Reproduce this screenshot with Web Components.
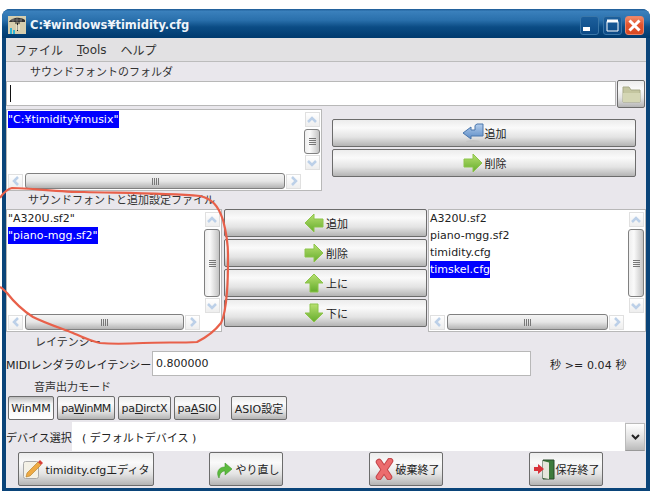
<!DOCTYPE html>
<html>
<head>
<meta charset="utf-8">
<title>timidity.cfg</title>
<style>
html, body { margin: 0; background: #fff; }
body { padding: 9px 8px 0 2px; font: 11px "DejaVu Sans", "Noto Sans CJK JP", sans-serif; color: #222; position: relative; height: 495px; box-sizing: border-box; overflow: hidden; }
.mark { position: absolute; left: 0; top: 0; width: 658px; height: 504px; pointer-events: none; }
.row { display: flex; }
.row > * { flex: none; }
.folder { height: 28px; gap: 1px; align-items: flex-start; }
.top { height: 82px; }
.top .side { flex: 1; display: flex; flex-direction: column; gap: 2px; padding: 10px 10px 0; }
.mid { height: 123px; --pad: 0px; }
.mid .side { display: flex; flex-direction: column; gap: 2px; width: 203px; padding: 0 1px 0 2px; }
.latency { height: 25px; align-items: center; }
.latency .hint { margin-left: 19px; white-space: nowrap; letter-spacing: .1px; }
.modes { height: 24px; padding-left: 2px; gap: 3px; }
.modes .gap { width: 5px; }
.device { height: 29px; margin-top: 2px; align-items: center; }
.device .val { width: 553px; height: 29px; background: #fff; display: flex; align-items: center; padding-left: 10px; box-sizing: border-box; }
.device .arrow { width: 18px; height: 26px; border: 1px solid #bbb; border-bottom-color: #999; background: linear-gradient(#fff, #ddd 60%, #bbb); display: flex; align-items: center; justify-content: center; }
.actions { height: 34px; margin-top: 1px; padding-left: 12px; }
</style>
</head>
<body>
<x-window title-text="C:¥windows¥timidity.cfg">
  <x-menubar><span>ファイル</span><span><u>T</u>ools</span><span>ヘルプ</span></x-menubar>
  <x-caption indent="24" height="19" lift="2">サウンドフォントのフォルダ</x-caption>
  <div class="row folder">
    <x-field width="610" caret></x-field>
    <x-button icon="folder" style="width:28px;height:28px;margin-top:-1px"></x-button>
  </div>
  <div class="row top">
    <x-listbox width="316" height="82" thumb="25" hthumb="260">
      <x-item selected>"C:¥timidity¥musix"</x-item>
    </x-listbox>
    <div class="side">
      <x-button icon="back" style="height:28px">追加</x-button>
      <x-button icon="right" style="height:28px">削除</x-button>
    </div>
  </div>
  <x-caption indent="22" height="18" lift="2">サウンドフォントと追加設定ファイル</x-caption>
  <div class="row mid">
    <x-listbox width="216" height="123" thumb="68" hthumb="159">
      <x-item>"A320U.sf2"</x-item>
      <x-item selected>"piano-mgg.sf2"</x-item>
    </x-listbox>
    <div class="side">
      <x-button icon="left" style="height:28px">追加</x-button>
      <x-button icon="right" style="height:28px">削除</x-button>
      <x-button icon="up" style="height:28px">上に</x-button>
      <x-button icon="down" style="height:28px">下に</x-button>
    </div>
    <x-listbox width="218" height="123" thumb="68" hthumb="161">
      <x-item>A320U.sf2</x-item>
      <x-item>piano-mgg.sf2</x-item>
      <x-item>timidity.cfg</x-item>
      <x-item selected>timskel.cfg</x-item>
    </x-listbox>
  </div>
  <x-caption indent="29" height="19" lift="2">レイテンシー</x-caption>
  <div class="row latency">
    <span style="white-space:nowrap;width:146px">MIDIレンダラのレイテンシー</span>
    <x-field width="379" text="0.800000"></x-field>
    <span class="hint">秒 &gt;= 0.04 秒</span>
  </div>
  <x-caption indent="28" height="20">音声出力モード</x-caption>
  <div class="row modes">
    <x-button pressed style="width:46px">WinMM</x-button>
    <x-button style="width:58px;letter-spacing:-.6px">pa<u>W</u>inMM</x-button>
    <x-button style="width:53px;letter-spacing:-.2px">pa<u>D</u>irctX</x-button>
    <x-button style="width:46px;letter-spacing:-.2px">pa<u>A</u>SIO</x-button>
    <span class="gap"></span>
    <x-button style="width:56px">ASIO設定</x-button>
  </div>
  <div class="row device">
    <span style="white-space:nowrap;width:66px">デバイス選択</span>
    <div class="val">( デフォルトデバイス )</div>
    <div class="arrow"><svg width="9" height="6" viewBox="0 0 9 6"><path d="M1 1l3.5 3.5L8 1" fill="none" stroke="#222" stroke-width="2"/></svg></div>
  </div>
  <div class="row actions">
    <x-button icon="note" style="width:136px;margin-right:55px">timidity.cfgエディタ</x-button>
    <x-button icon="redo" style="width:74px;margin-right:86px">やり直し</x-button>
    <x-button icon="cross" style="width:74px;margin-right:86px">破棄終了</x-button>
    <x-button icon="door" style="width:74px">保存終了</x-button>
  </div>
</x-window>
<svg class="mark" viewBox="0 0 658 504">
  <path d="M0 198C4 192 7 189 12 188C30 188 60 192 84 192C120 193 165 193 200 196C212 199 218 205 223 220C227 235 228 245 228 255C228 270 228 280 227 292C226 305 225 315 221 323C214 332 205 338 197 342C180 343 160 342 143 343C125 344 110 344 100 343C90 341 82 337 73 333C60 328 45 323 33 317C22 310 14 302 7 293C4 290 2 288 0 287" fill="none" stroke="#e8604a" stroke-width="2.2"/>
</svg>
<script>
const GREEN = '<defs><linearGradient id="g" x1="0" y1="0" x2="0" y2="1"><stop offset="0" stop-color="#b8e070"/><stop offset="1" stop-color="#64ac2c"/></linearGradient></defs>';
const ARROW = 'fill="url(#g)" stroke="#8cc44a" stroke-linejoin="round"';
const ICONS = {
  folder: '<path d="M3 4h6l2 3h9v12H3z" fill="#c4c6a0" stroke="#a8aa88"/><path d="M3 10h17v9H3z" fill="#d4d6b4"/>',
  back: '<defs><linearGradient id="g" x1="0" y1="0" x2="0" y2="1"><stop offset="0" stop-color="#b4cdec"/><stop offset="1" stop-color="#5c8cc6"/></linearGradient></defs><ellipse cx="11" cy="19.5" rx="7" ry="1.5" fill="#c4c4c4"/><path d="M1 11L9 5v3h4V3.500L15 2h6v12H9v3z" fill="url(#g)" stroke="#4a76ac" stroke-linejoin="round"/>',
  right: GREEN + '<path d="M2 7h9V2l9 9-9 9v-5H2z" ' + ARROW + '/>',
  left: GREEN + '<path d="M20 7h-9V2l-9 9 9 9v-5h9z" ' + ARROW + '/>',
  up: GREEN + '<path d="M7 20v-9H2l9-9 9 9h-5v9z" ' + ARROW + '/>',
  down: GREEN + '<path d="M7 2v9H2l9 9 9-9h-5V2z" ' + ARROW + '/>',
  note: '<rect x="1.500" y="3.500" width="15" height="17" rx="2" fill="#f4f1e6" stroke="#aaa"/><path d="M4 19l1-4L16 4l3 3L8 18z" fill="#eeaa44" stroke="#b07a24" stroke-width=".6"/><path d="M16 4l2-2 3 3-2 2z" fill="#d8403a"/>',
  redo: '<path d="M6 20C3 15 5 9 12 9V5l7 6-7 6v-4C9 13 7 15 6 20z" fill="#5cba3e" stroke="#3f9a2a" stroke-width=".6"/>',
  cross: '<path d="M6 4l10 15M17 3L6 19" fill="none" stroke="#c2464a" stroke-width="6.500" stroke-linecap="round"/><path d="M6 4l10 15M17 3L6 19" fill="none" stroke="#ec6c6e" stroke-width="4.500" stroke-linecap="round"/>',
  door: '<path d="M10 2h11v19H10z" fill="#3d7a3c" stroke="#2a4a2a"/><path d="M10 3l6 1.500V21l-6-1z" fill="#e6e6dc"/><path d="M1 9h4V6l6 5-6 5v-3H1z" fill="#d8323a"/>'
};

class XWindow extends HTMLElement {
  constructor() {
    super();
    this.attachShadow({ mode: "open" }).innerHTML = `<style>
      :host { display: block; width: 648px; height: 482px; box-sizing: border-box; background: #0a4479; border-radius: 8px 8px 0 0; padding: 0 4px 3px; }
      .bar { box-sizing: border-box; height: 29px; display: flex; align-items: center; margin: 0 -4px; padding: 3px 6px 0; border-radius: 8px 8px 0 0; background: linear-gradient(#1d5a94, #3a80bc 8%, #2a70ac 38%, #0b4c85 62%, #003a6e); color: #eef4fa; font: bold 11.5px "DejaVu Sans", sans-serif; }
      .logo { width: 18px; height: 18px; margin-right: 4px; flex: none; }
      .title { flex: 1; }
      .ctl { box-sizing: border-box; width: 19px; height: 19px; margin-left: 3.5px; border: 1px solid #3a76a8; border-radius: 3px; background: linear-gradient(#1c5f9c, #0c4a86); display: block; }
      .ctl.close { background: linear-gradient(#f08a68, #e2542e 45%, #d84a24); border-color: #e8846a; }
      .ctl svg { display: block; }
      .body { height: 450px; background: #e9e7ec; }
    </style>
    <div class="bar">
      <svg class="logo" viewBox="0 0 18 18"><rect width="18" height="18" fill="#d6ceae"/><path d="M1 6C3 2 12 0 17 4v2H1z" fill="#333"/><path d="M3 4h11M5 2v4M9 1v5M13 2v4" stroke="#999" stroke-width=".5"/><path d="M7 7h5M9.500 7v8" stroke="#222"/><path d="M8 9h4v5H8z" fill="#f2eeda" opacity=".6"/><path d="M2 12h2v6H2zM5 14h2v4H5z" fill="#2fb4d4"/></svg>
      <span class="title"></span>
      <span class="ctl"><svg width="17" height="17"><rect x="2" y="10" width="7" height="4" fill="#fff"/></svg></span>
      <span class="ctl"><svg width="17" height="17"><path d="M3 4.500h11V14H3z" fill="none" stroke="#fff"/><path d="M3 4h11" stroke="#fff" stroke-width="3"/></svg></span>
      <span class="ctl close"><svg width="17" height="17"><path d="M3.500 3.500l10 10M13.500 3.500l-10 10" stroke="#fff" stroke-width="3"/></svg></span>
    </div>
    <div class="body"><slot></slot></div>`;
    this.shadowRoot.querySelector(".title").textContent = this.getAttribute("title-text");
  }
}

class XMenubar extends HTMLElement {
  constructor() {
    super();
    this.attachShadow({ mode: "open" }).innerHTML = `<style>
      :host { display: flex; gap: 14px; height: 23px; padding-left: 9px; align-items: center; background: #e2e1e3; border-bottom: 1px solid #bcbcbc; font-size: 12px; color: #333; }
    </style><slot></slot>`;
  }
}

class XCaption extends HTMLElement {
  constructor() {
    super();
    this.attachShadow({ mode: "open" }).innerHTML = `<style>
      :host { display: flex; align-items: center; box-sizing: border-box; white-space: nowrap; color: #333; padding-left: ${this.getAttribute("indent")}px; padding-bottom: ${this.getAttribute("lift") || 0}px; height: ${this.getAttribute("height")}px; }
    </style><slot></slot>`;
  }
}

class XField extends HTMLElement {
  constructor() {
    super();
    let caret = this.hasAttribute("caret") ? '<i class="caret"></i>' : "";
    this.attachShadow({ mode: "open" }).innerHTML = `<style>
      :host { display: flex; align-items: center; box-sizing: border-box; height: 25px; width: ${this.getAttribute("width")}px; background: #fff; border: 1px solid #b8b8b8; padding-left: 3px; }
      .caret { width: 1px; height: 17px; background: #111; margin-right: 1px; }
    </style>${caret}<span>${this.getAttribute("text") || ""}</span>`;
  }
}

class XButton extends HTMLElement {
  constructor() {
    super();
    let name = this.getAttribute("icon");
    let icon = name ? `<svg width="22" height="22" viewBox="0 0 22 22">${ICONS[name]}</svg>` : "";
    this.attachShadow({ mode: "open" }).innerHTML = `<style>
      :host { display: flex; align-items: center; justify-content: center; box-sizing: border-box; white-space: nowrap; border: 1px solid #6c6c6c; border-radius: 2px; background: linear-gradient(#ececec, #fafafa 30%, #e4e4e4 65%, #b4b4b4); color: #222; }
      :host([pressed]) { background: linear-gradient(#bbb, #f4f4f4 30%, #fff); }
      svg { flex: none; margin-right: 1px; }
    </style>${icon}<slot></slot>`;
  }
}

class XScrollbar extends HTMLElement {
  constructor() {
    super();
    let vertical = this.getAttribute("dir") === "v";
    let size = this.getAttribute("thumb");
    let a = vertical ? "M2 8l4-4 4 4" : "M8 2L4 6l4 4";
    let b = vertical ? "M2 4l4 4 4-4" : "M4 2l4 4-4 4";
    let grip = vertical
      ? '<path d="M0 .5h7M0 2.5h7M0 4.5h7M0 6.5h7" stroke="#777"/>'
      : '<path d="M.5 0v7M2.5 0v7M4.5 0v7M6.5 0v7" stroke="#777"/>';
    this.attachShadow({ mode: "open" }).innerHTML = `<style>
      :host { display: flex; flex-direction: ${vertical ? "column" : "row"}; align-items: center; }
      .step { flex: none; width: 15px; height: 15px; border: 1px solid #e0e0e0; box-sizing: border-box; background: linear-gradient(#fff, #eee); display: flex; align-items: center; justify-content: center; }
      .thumb { flex: none; box-sizing: border-box; display: flex; align-items: center; justify-content: center; border: 1px solid #808080; border-radius: 3px; ${vertical ? `width: 16px; height: ${size}px; margin: 2px 0 1px; background: linear-gradient(90deg, #eee, #fafafa 35%, #c4c4c4);` : `height: 16px; width: ${size}px; margin: 0 1px 0 2px; background: linear-gradient(#f4f4f4, #e6e6e6 50%, #b4b4b4);`} }
    </style>
    <span class="step"><svg width="12" height="12"><path d="${a}" fill="none" stroke="#bcd0e8" stroke-width="2.5"/></svg></span>
    <span class="thumb"><svg width="7" height="7">${grip}</svg></span>
    <span class="step"><svg width="12" height="12"><path d="${b}" fill="none" stroke="#bcd0e8" stroke-width="2.5"/></svg></span>`;
  }
}

class XListbox extends HTMLElement {
  constructor() {
    super();
    this.attachShadow({ mode: "open" }).innerHTML = `<style>
      :host { display: block; position: relative; box-sizing: border-box; width: ${this.getAttribute("width")}px; height: ${this.getAttribute("height")}px; background: #fff; border: 1px solid #b8b8b8; }
      .items { padding: var(--pad, 1px) 1px 0; display: flex; flex-direction: column; align-items: flex-start; }
      x-scrollbar { position: absolute; }
      .v { right: 1px; top: 2px; }
      .h { left: 1px; bottom: 1px; }
    </style>
    <div class="items"><slot></slot></div>
    <x-scrollbar class="v" dir="v" thumb="${this.getAttribute("thumb")}"></x-scrollbar>
    <x-scrollbar class="h" dir="h" thumb="${this.getAttribute("hthumb")}"></x-scrollbar>`;
  }
}

class XItem extends HTMLElement {
  constructor() {
    super();
    this.attachShadow({ mode: "open" }).innerHTML = `<style>
      :host { display: block; height: 17px; line-height: 17px; white-space: nowrap; color: #222; }
      :host([selected]) { background: #0000ff; color: #fff; }
    </style><slot></slot>`;
  }
}

customElements.define("x-window", XWindow);
customElements.define("x-menubar", XMenubar);
customElements.define("x-caption", XCaption);
customElements.define("x-field", XField);
customElements.define("x-button", XButton);
customElements.define("x-scrollbar", XScrollbar);
customElements.define("x-listbox", XListbox);
customElements.define("x-item", XItem);
</script>
</body>
</html>
